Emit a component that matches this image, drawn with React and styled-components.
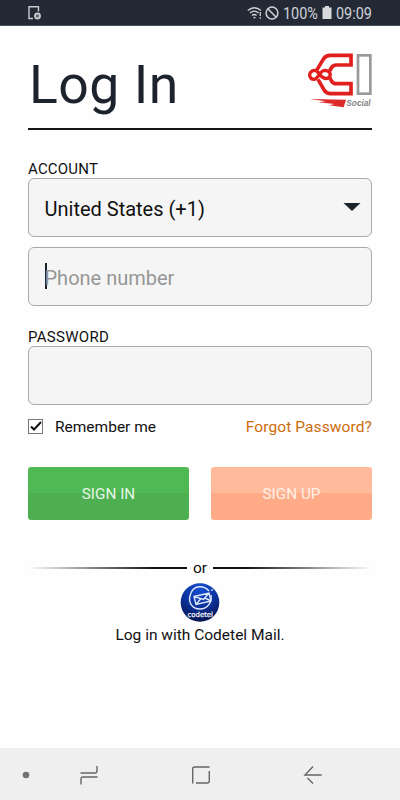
import React from 'react'

import styled, {createGlobalStyle} from 'styled-components';

const GlobalStyle = createGlobalStyle`
    * {
        box-sizing: border-box;
    }
    body {
        margin: 0;
        background: #fff;
        font-family: Roboto, 'Liberation Sans', sans-serif;
        color: #111;
    }
`

const Screen = styled.div`
    display: flex;
    flex-direction: column;
    width: 400px;
    height: 800px;
    overflow: hidden;
    background: #fefefe;
`

const StatusBar = styled.div`
    display: flex;
    align-items: center;
    justify-content: space-between;
    height: 26px;
    flex: none;
    padding: 0 28px;
    background: #232a36;
    border-bottom: 1px solid #4b5059;
    color: #d0d2d6;
`

const StatusGroup = styled.div`
    display: flex;
    align-items: center;
    height: 25px;
`

const StatusText = styled.span`
    width: ${props => props.$width};
    padding-top: 1px;
    font-size: 16px;
    line-height: 25px;
    white-space: nowrap;
    transform: scaleX(0.9);
    transform-origin: left;
    margin-left: ${props => props.$left};
`

const Content = styled.main`
    flex: 1;
    padding: 0 28px;
`

const Header = styled.header`
    display: flex;
    align-items: flex-start;
    justify-content: space-between;
    height: 104px;
    padding-top: 19px;
    border-bottom: 2px solid #15161a;
`

const Title = styled.h1`
    margin: 8px 0 0 1px;
    font-size: 53.5px;
    line-height: 64px;
    font-weight: 400;
    letter-spacing: 0.5px;
    color: #1d232d;
`

const Label = styled.label`
    display: block;
    margin-top: ${props => props.$top};
    height: 18px;
    font-size: 15px;
    line-height: 18px;
    letter-spacing: ${props => props.$spacing};
`

const Field = styled.div`
    display: flex;
    align-items: center;
    justify-content: space-between;
    height: 59px;
    margin-bottom: ${props => props.$bottom || '0'};
    padding: 2px 10px 0 15.5px;
    background: #f5f5f5;
    border: 1px solid #aaa;
    border-radius: 6px;
    font-size: 20px;
    color: ${props => props.$muted ? '#969696' : '#111'};
`

const Placeholder = styled.span`
    display: flex;
    align-items: center;
`

const Caret = styled.span`
    width: 2px;
    height: 26px;
    margin-right: -2px;
    margin-top: -3px;
    background: #1b1f26;
`

const Arrow = styled.svg`
    margin-top: -3px;
`

const Options = styled.div`
    display: flex;
    align-items: center;
    height: 20px;
    margin-top: 12px;
    font-size: 15.5px;
    line-height: 20px;
`

const Checkbox = styled.span`
    display: flex;
    width: 15px;
    height: 15px;
    margin: -2px 12px 0 0;
    border: 1px solid #777;
    background: #fff;
`

const Forgot = styled.a`
    margin-left: auto;
    letter-spacing: 0.1px;
    color: #cc6d0c;
`

const Actions = styled.div`
    display: flex;
    justify-content: space-between;
    margin-top: 29.5px;
`

const Button = styled.button`
    width: 161px;
    height: 53px;
    padding: 2px 0 0;
    border: 0;
    border-radius: 3px;
    background: linear-gradient(${props => props.$upper} 50%, ${props => props.$lower} 50%);
    color: ${props => props.$color};
    font-family: inherit;
    font-size: 15.3px;
`

const Divider = styled.div`
    display: flex;
    align-items: center;
    height: 20px;
    margin-top: 38.5px;
    font-size: 15.5px;
`

const Line = styled.span`
    flex: 1;
    height: 2px;
    margin-top: -1px;
    background: linear-gradient(to ${props => props.$to}, transparent, #111 80%);
`

const Or = styled.span`
    width: 26px;
    text-align: center;
`

const MailLogin = styled.div`
    display: flex;
    flex-direction: column;
    align-items: center;
    gap: 2px;
    padding-top: 4.5px;
    font-size: 15.5px;
    line-height: 20px;
`

const NavBar = styled.nav`
    display: flex;
    height: 52px;
    flex: none;
    background: #efefef;
`

const Logo = () => (
    <svg width="65" height="71" viewBox="20 0 195 213">
        <g fill="none" stroke="#e21f1f">
            <path strokeWidth="11" d="M47 79 L70 41 Q77 31 89 31 H152 V60 H108 Q99 60 94 67 L88 78 M53 103 L72 136 Q79 146 91 146 H152 V116 H107 Q99 116 94 109 L88 98" />
            <path strokeWidth="10" d="M58 89 C52 77 42 73 34 79 C23 87 28 103 41 103 C54 103 57 77 73 76 C90 76 93 90 86 97 C77 104 66 98 58 89 Z" />
        </g>
        <rect x="173" y="31" width="37" height="115" fill="none" stroke="#9a9a9a" strokeWidth="8" />
        <path d="M28 162 L137 164 L130 187 L86 181 L102 177 L55 172 L76 169 Z" fill="#dd2b2b" />
        <text x="138" y="182" fontFamily="Liberation Sans, sans-serif" fontSize="27" fontWeight="bold" fontStyle="italic" fill="#858585" textLength="73" lengthAdjust="spacingAndGlyphs">Social</text>
    </svg>
)

const CodetelIcon = () => (
    <svg width="40" height="40" viewBox="0 0 40 40">
        <defs>
            <radialGradient id="codetel" cx="50%" cy="15%" r="85%">
                <stop offset="0" stopColor="#164fd2" />
                <stop offset="0.5" stopColor="#0c35a2" />
                <stop offset="1" stopColor="#051451" />
            </radialGradient>
        </defs>
        <circle cx="20" cy="19.5" r="19.3" fill="url(#codetel)" />
        <g fill="none" stroke="#dfe8fa" strokeWidth="1.4">
            <path d="M29 8 C24 2 14 2 11 10 C7 19 12 26 20 26 C28 26 32 19 31 12" />
            <path d="M14 13.5 L29 10 L31 18 L16 21.5 Z M14 13.5 L23.5 16.5 L29 10 M16 21.5 L20.5 16 M31 18 L25 15" />
        </g>
        <circle cx="32" cy="7" r="0.9" fill="#c8d6f5" />
        <text x="7.5" y="33.5" fontFamily="DejaVu Sans, sans-serif" fontSize="7" fill="#fff" stroke="#fff" strokeWidth="0.2" textLength="25.5" lengthAdjust="spacingAndGlyphs">codetel</text>
    </svg>
)

const App = () => {

    return (
        <>
            <GlobalStyle />
            <Screen>
                <StatusBar>
                    <svg width="14" height="16" viewBox="0 0 14 16" fill="none" stroke="#c9cbd0" strokeWidth="1.4">
                        <path d="M5 13.5 H1 V1.7 H10.5 V6.5" />
                        <circle cx="9.5" cy="11" r="2.4" strokeWidth="2" />
                        <path d="M9.3 9.8 V11.3 H10.6" strokeWidth="0.6" />
                    </svg>
                    <StatusGroup>
                        <svg width="34" height="16" viewBox="0 0 34 16" fill="none" stroke="#d0d2d6" strokeWidth="1.3">
                            <path d="M0.8 5.5 Q7.3 0 14 5.5 M3 8 Q7.4 4.4 11.6 8 M5 10.4 Q7.3 8.6 9.6 10.4" />
                            <path d="M6 12 H9 L7.5 13.7 Z" fill="#d0d2d6" stroke="none" />
                            <path d="M13.3 7 V11 M13.3 12.3 V13.7" />
                            <circle cx="25" cy="8" r="5.9" strokeWidth="1.5" />
                            <path d="M20.8 3.8 L29.2 12.2" strokeWidth="1.5" />
                        </svg>
                        <StatusText $left="2px" $width="39px">100%</StatusText>
                        <svg width="10" height="13" viewBox="0 0 10 13">
                            <path d="M3 0 H7 V1.5 H9.5 V13 H0.5 V1.5 H3 Z" fill="#d8d9db" />
                        </svg>
                        <StatusText $left="4px" $width="36px">09:09</StatusText>
                    </StatusGroup>
                </StatusBar>
                <Content>
                    <Header>
                        <Title>Log In</Title>
                        <Logo />
                    </Header>
                    <Label $top="30px" $spacing="0.2px">ACCOUNT</Label>
                    <Field $bottom="10px">
                        <span>United States (+1)</span>
                        <Arrow width="18" height="8" viewBox="0 0 18 8">
                            <path d="M0.5 0 H17.5 L9 8 Z" fill="#1d252d" />
                        </Arrow>
                    </Field>
                    <Field $muted>
                        <Placeholder>
                            <Caret />
                            <span>Phone number</span>
                        </Placeholder>
                    </Field>
                    <Label $top="22px" $spacing="0.3px">PASSWORD</Label>
                    <Field />
                    <Options>
                        <Checkbox>
                            <svg width="13" height="13" viewBox="0 0 13 13" fill="none" stroke="#111" strokeWidth="2">
                                <path d="M2 6.5 L5 9.5 L12 2" />
                            </svg>
                        </Checkbox>
                        <span>Remember me</span>
                        <Forgot>Forgot Password?</Forgot>
                    </Options>
                    <Actions>
                        <Button $upper="#50b953" $lower="#4daf50" $color="#e5f6e5">SIGN IN</Button>
                        <Button $upper="#ffba9b" $lower="#ffab87" $color="#fff0e8">SIGN UP</Button>
                    </Actions>
                    <Divider>
                        <Line $to="right" />
                        <Or>or</Or>
                        <Line $to="left" />
                    </Divider>
                    <MailLogin>
                        <CodetelIcon />
                        <span>Log in with Codetel Mail.</span>
                    </MailLogin>
                </Content>
                <NavBar>
                    <svg width="400" height="52" viewBox="0 0 400 52" fill="none" stroke="#666" strokeWidth="1.4">
                        <circle cx="26" cy="27" r="3.3" fill="#727272" stroke="none" />
                        <path d="M80.5 25 H95 Q97 25 97 23 V18 M97.5 29 H83 Q81 29 81 31 V36.5" />
                        <path d="M192.7 35.5 V21 Q192.7 19 194.7 19 H209.5 M209.3 23 V33 Q209.3 35 207.3 35 H196" />
                        <path d="M321.7 27 H305 L313 18.5 M307.5 30 L313 35.5" />
                    </svg>
                </NavBar>
            </Screen>
        </>
    )
}

export default App
